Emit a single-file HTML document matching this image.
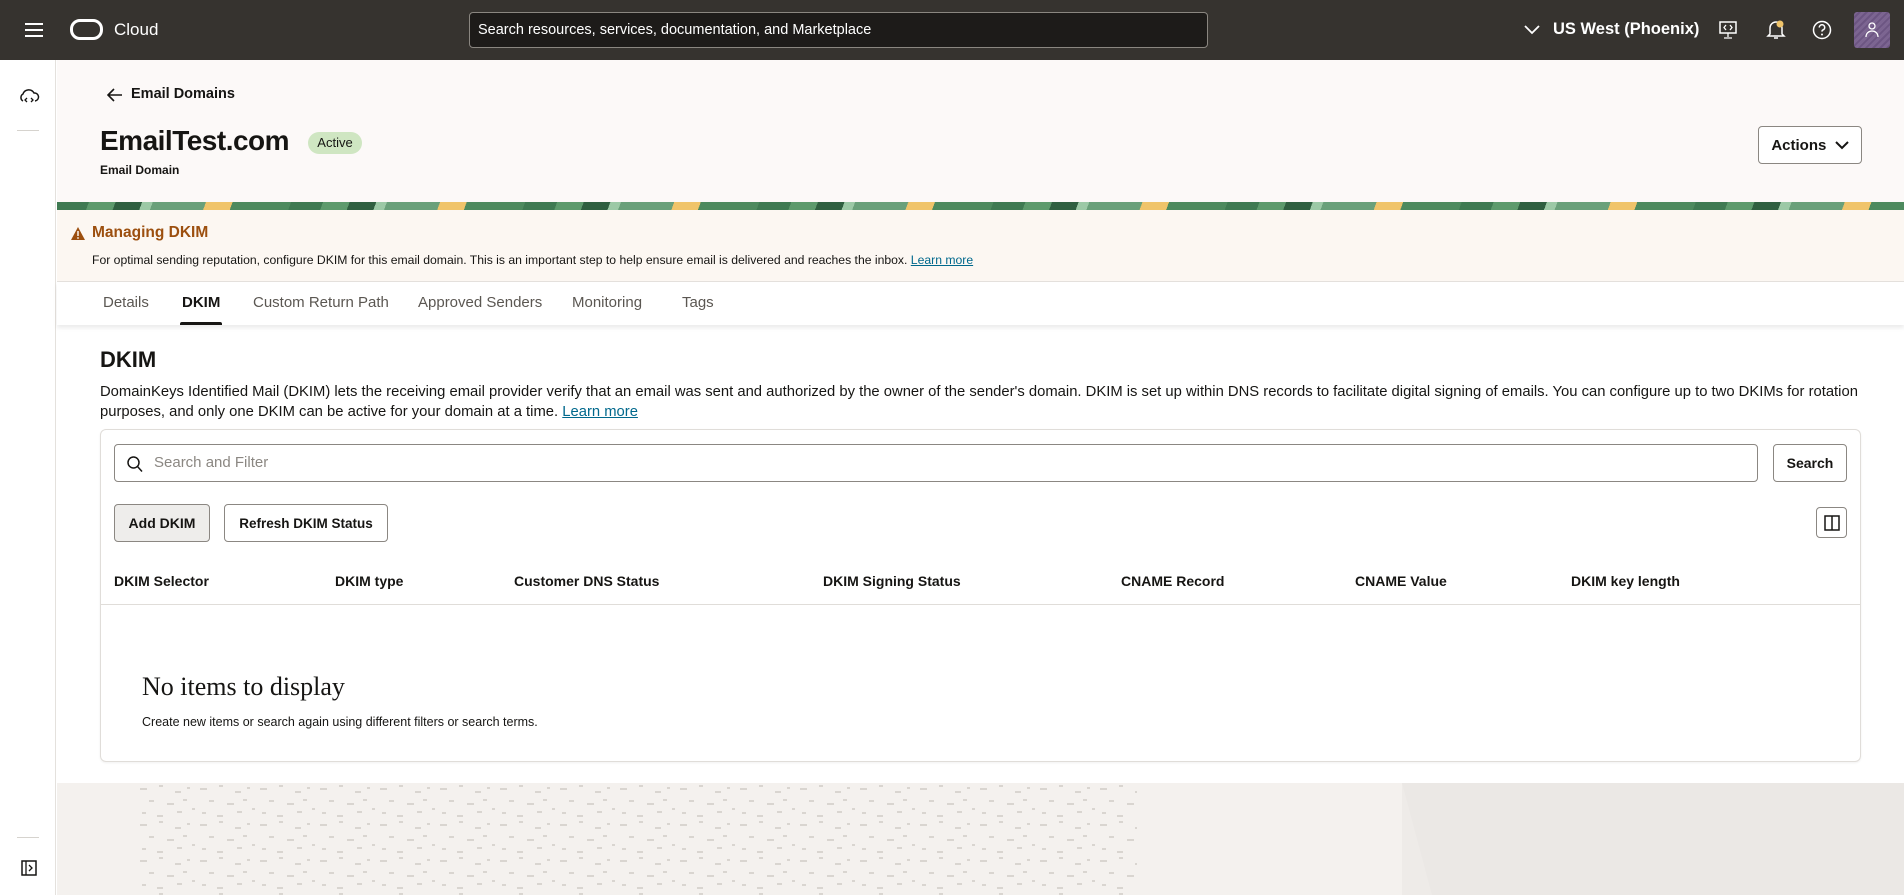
<!DOCTYPE html>
<html><head><meta charset="utf-8"><style>
*{box-sizing:border-box;margin:0;padding:0}
body{width:1904px;height:895px;overflow:hidden;font-family:"Liberation Sans",sans-serif;color:#161513;background:#fff;position:relative}
.a{position:absolute}
.top{left:0;top:0;width:1904px;height:60px;background:#36332f}
.side{left:0;top:60px;width:56px;height:835px;background:#fff;border-right:1px solid #e4e1dd}
.hdr{left:57px;top:60px;width:1847px;height:142px;background:#fcf9f8}
.strip{left:57px;top:202px;width:1847px;height:8px;background:repeating-linear-gradient(110deg,#3f7a52 0 30px,#5d9a6c 30px 55px,#2f5f40 55px 80px,#9cc9a6 80px 90px,#6aa07a 90px 140px,#f0c46a 140px 165px,#4d8a5e 165px 220px)}
.alert{left:57px;top:210px;width:1847px;height:72px;background:#fcf7f2;border-bottom:1px solid #e4e1dd}
.tabs{left:57px;top:282px;width:1847px;height:43px;background:#fff;box-shadow:0 3px 4px rgba(0,0,0,.08)}
.tab{position:absolute;top:12px;font-size:15px;color:#5b5752}
.btn{position:absolute;border:1px solid #8b8782;border-radius:4px;background:#fff;font-size:14px;font-weight:bold;display:flex;align-items:center;justify-content:center;color:#161513}
.th{position:absolute;top:573px;font-size:14px;font-weight:bold;color:#161513}
</style></head><body>
<div class="a top">
  <svg class="a" style="left:24px;top:22px" width="20" height="16"><path d="M1 2h18M1 8h18M1 14h18" stroke="#fff" stroke-width="2"/></svg>
  <div class="a" style="left:70px;top:19px;width:33px;height:21px;border:3.5px solid #fff;border-radius:10px"></div>
  <div class="a" style="left:114px;top:20px;color:#fff;font-size:17px">Cloud</div>
  <div class="a" style="left:469px;top:12px;width:739px;height:36px;background:#1d1b19;border:1px solid #8a8680;border-radius:4px;color:#fff;font-size:14.5px;padding:9px 8px">Search resources, services, documentation, and Marketplace</div>
  <svg class="a" style="left:1524px;top:25px" width="16" height="10"><path d="M1 1l7 7 7-7" stroke="#fff" stroke-width="1.8" fill="none"/></svg>
  <div class="a" style="left:1553px;top:20px;color:#fff;font-size:16.5px;font-weight:bold">US West (Phoenix)</div>
  <svg class="a" style="left:1718px;top:20px" width="20" height="20"><rect x="2" y="2" width="16" height="11" stroke="#fff" fill="none" stroke-width="1.5"/><path d="M10 13v4M6 18h8M8 5l-2 2.5 2 2.5M12 5l2 2.5-2 2.5" stroke="#fff" fill="none" stroke-width="1.3"/></svg>
  <svg class="a" style="left:1766px;top:19px" width="20" height="22"><path d="M4 15V9a6 6 0 0 1 12 0v6l2 2H2z M8 19h4" stroke="#fff" fill="none" stroke-width="1.5"/><circle cx="14" cy="5" r="3.5" fill="#f0c46a"/></svg>
  <svg class="a" style="left:1812px;top:20px" width="20" height="20"><circle cx="10" cy="10" r="8.5" stroke="#fff" fill="none" stroke-width="1.5"/><path d="M7.3 7.5a2.7 2.7 0 1 1 3.6 2.5c-.7.3-.9.8-.9 1.6" stroke="#fff" fill="none" stroke-width="1.5"/><circle cx="10" cy="14.5" r="1" fill="#fff"/></svg>
  <div class="a" style="left:1854px;top:12px;width:36px;height:36px;background:repeating-linear-gradient(135deg,#7c6591 0 3px,#6c5582 3px 5px);border-radius:3px"><svg class="a" style="left:10px;top:9px" width="16" height="18"><circle cx="8" cy="5" r="3" stroke="#fff" fill="none" stroke-width="1.3"/><path d="M2 16c0-4 3-6 6-6s6 2 6 6" stroke="#fff" fill="none" stroke-width="1.3"/></svg></div>
</div>
<div class="a side">
  <svg class="a" style="left:18px;top:26px" width="22" height="20"><path d="M5 15a4 4 0 0 1 0-7 6 6 0 0 1 11-1 4 4 0 0 1 1 8" stroke="#161513" fill="none" stroke-width="1.5"/><path d="M9 12l-2 2 2 2M13 12l2 2-2 2" stroke="#161513" fill="none" stroke-width="1.3"/></svg>
  <div class="a" style="left:17px;top:70px;width:22px;height:1px;background:#d6d3ce"></div>
  <div class="a" style="left:17px;top:777px;width:22px;height:1px;background:#d6d3ce"></div>
  <svg class="a" style="left:21px;top:800px" width="16" height="16"><rect x="1" y="1" width="14" height="14" stroke="#161513" fill="none" stroke-width="1.5"/><path d="M5 1v14M8 5l3 3-3 3" stroke="#161513" fill="none" stroke-width="1.3"/></svg>
</div>
<div class="a hdr">
  <svg class="a" style="left:50px;top:28px" width="16" height="14"><path d="M15 7H2M7 1L1 7l6 6" stroke="#161513" fill="none" stroke-width="1.6"/></svg>
  <div class="a" style="left:74px;top:26px;font-size:14.5px;font-weight:bold">Email Domains</div>
  <div class="a" style="left:43px;top:65px;font-size:28px;font-weight:bold;letter-spacing:-.5px">EmailTest.com</div>
  <div class="a" style="left:251px;top:72px;width:54px;height:22px;background:#cfe6c2;border-radius:11px;font-size:13px;text-align:center;line-height:22px">Active</div>
  <div class="a" style="left:43px;top:103px;font-size:12px;font-weight:bold">Email Domain</div>
  <div class="btn" style="left:1701px;top:66px;width:104px;height:38px;font-size:15px">Actions&nbsp;&nbsp;<svg width="14" height="9"><path d="M1 1l6 6 6-6" stroke="#161513" fill="none" stroke-width="2"/></svg></div>
</div>
<div class="a strip"></div>
<div class="a alert">
  <svg class="a" style="left:14px;top:17px" width="14" height="13"><path d="M7 0L14 13H0z" fill="#9c4f0f"/><path d="M7 4v5" stroke="#fcf7f2" stroke-width="1.5"/><circle cx="7" cy="11" r=".9" fill="#fcf7f2"/></svg>
  <div class="a" style="left:35px;top:14px;font-size:15.5px;font-weight:bold;color:#9c4f0f">Managing DKIM</div>
  <div class="a" style="left:35px;top:43px;font-size:12.2px">For optimal sending reputation, configure DKIM for this email domain. This is an important step to help ensure email is delivered and reaches the inbox. <span style="color:#00688c;text-decoration:underline">Learn more</span></div>
</div>
<div class="a tabs">
  <div class="tab" style="left:46px">Details</div>
  <div class="tab" style="left:125px;color:#161513;font-weight:bold">DKIM</div>
  <div class="a" style="left:123px;top:40px;width:42px;height:3px;background:#161513;border-radius:2px 2px 0 0"></div>
  <div class="tab" style="left:196px">Custom Return Path</div>
  <div class="tab" style="left:361px">Approved Senders</div>
  <div class="tab" style="left:515px">Monitoring</div>
  <div class="tab" style="left:625px">Tags</div>
</div>
<div class="a" style="left:100px;top:347px;font-size:22px;font-weight:bold">DKIM</div>
<div class="a" style="left:100px;top:382px;width:1770px;font-size:14.8px;line-height:20px">DomainKeys Identified Mail (DKIM) lets the receiving email provider verify that an email was sent and authorized by the owner of the sender's domain. DKIM is set up within DNS records to facilitate digital signing of emails. You can configure up to two DKIMs for rotation purposes, and only one DKIM can be active for your domain at a time. <span style="color:#00688c;text-decoration:underline">Learn more</span></div>
<div class="a" style="left:100px;top:429px;width:1761px;height:333px;border:1px solid #e0ddd9;border-radius:6px;box-shadow:0 1px 2px rgba(0,0,0,.06)"></div>
<div class="a" style="left:114px;top:444px;width:1644px;height:38px;border:1px solid #8b8782;border-radius:4px"><svg class="a" style="left:12px;top:11px" width="16" height="17"><circle cx="6.5" cy="6.5" r="5.5" stroke="#161513" fill="none" stroke-width="1.5"/><path d="M10.5 10.5l4.5 5" stroke="#161513" stroke-width="1.5"/></svg><div class="a" style="left:39px;top:9px;font-size:15px;color:#8b8782">Search and Filter</div></div>
<div class="btn" style="left:1773px;top:444px;width:74px;height:38px">Search</div>
<div class="btn" style="left:114px;top:504px;width:96px;height:38px;background:#eeedeb">Add DKIM</div>
<div class="btn" style="left:224px;top:504px;width:164px;height:38px;font-size:13.5px">Refresh DKIM Status</div>
<div class="btn" style="left:1816px;top:507px;width:31px;height:31px"><svg width="16" height="16"><rect x="1" y="1" width="14" height="14" stroke="#161513" fill="none" stroke-width="1.5"/><path d="M8 1v14" stroke="#161513" stroke-width="1.5"/></svg></div>
<div class="th" style="left:114px">DKIM Selector</div>
<div class="th" style="left:335px">DKIM type</div>
<div class="th" style="left:514px">Customer DNS Status</div>
<div class="th" style="left:823px">DKIM Signing Status</div>
<div class="th" style="left:1121px">CNAME Record</div>
<div class="th" style="left:1355px">CNAME Value</div>
<div class="th" style="left:1571px">DKIM key length</div>
<div class="a" style="left:101px;top:604px;width:1759px;height:1px;background:#e0ddd9"></div>
<div class="a" style="left:142px;top:672px;font-family:'Liberation Serif',serif;font-size:26px">No items to display</div>
<div class="a" style="left:142px;top:715px;font-size:12.5px">Create new items or search again using different filters or search terms.</div>
<div class="a" style="left:57px;top:783px;width:1847px;height:112px;background:#eeebe8;overflow:hidden">
  <div class="a" style="left:0;top:0;width:1345px;height:112px;background:#f4f1ee"></div>
  <div class="a" style="left:1345px;top:0;width:520px;height:112px;background:#ebe8e5;clip-path:polygon(0 0,100% 0,100% 100%,30px 100%)"></div>
  <svg class="a" style="left:80px;top:0" width="1000" height="112"><defs><pattern id="p" width="60" height="36" patternUnits="userSpaceOnUse"><path d="M3 6h7M22 3h4M38 9h6M50 5h3M12 18h5M30 21h7M46 17h4M5 30h4M20 33h6M40 29h5M55 26h3" stroke="#d9d5d0" stroke-width="2"/></pattern></defs><rect width="1000" height="112" fill="url(#p)"/></svg>
</div>
</body></html>
